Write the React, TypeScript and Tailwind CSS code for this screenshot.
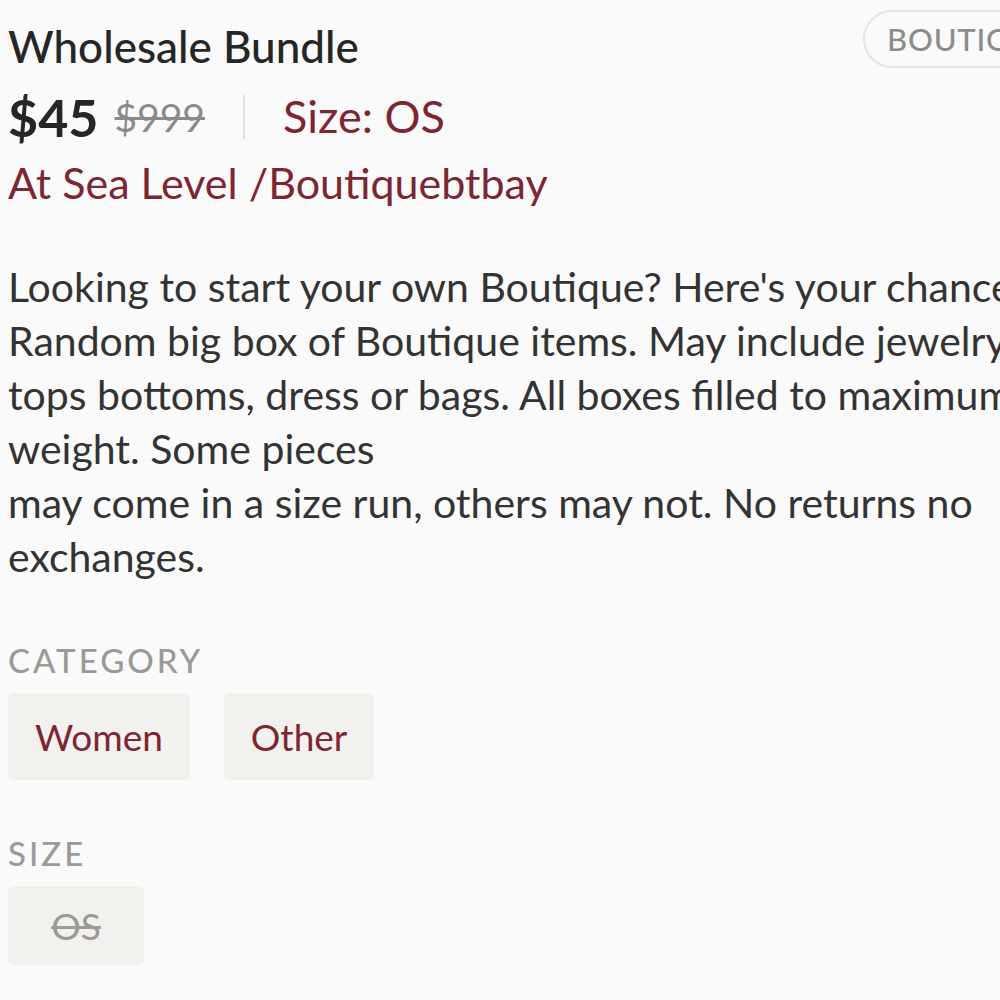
const descriptionLines = [
  "Looking to start your own Boutique? Here's your chance",
  "Random big box of Boutique items. May include jewelry,",
  "tops bottoms, dress or bags. All boxes filled to maximum",
  "weight. Some pieces",
  "may come in a size run, others may not. No returns no",
  "exchanges.",
];

const categories = ["Women", "Other"];

export default function App() {
  return (
    <div className="w-[1000px] h-[1000px] overflow-hidden bg-[#fafafa] font-['Lato','Liberation_Sans',sans-serif]">
      <div className="w-[1078px] pl-2">
        {/* Header */}
        <div className="flex justify-between items-start pt-[10px]">
          <h1 className="mt-[12px] text-[44px] leading-[48px] font-medium text-[#262626]">
            Wholesale Bundle
          </h1>
          <div className="h-[58px] px-[22px] flex items-center rounded-full border-2 border-[#e4e4e2] text-[31px] font-medium tracking-wide text-[#8c8c8a]">
            BOUTIQUE
          </div>
        </div>

        {/* Price row */}
        <div className="flex items-center mt-[19px] h-[56px]">
          <span className="text-[52px] font-bold text-[#262626]">$45</span>
          <span className="ml-4 text-[39px] text-[#8a8a8a] line-through">
            $999
          </span>
          <span className="mx-[38px] w-[2px] h-[44px] bg-[#e2e2e0]" />
          <span className="text-[45px] text-[#7d2633]">Size: OS</span>
        </div>

        <div className="mt-[12px] text-[43px] leading-[52px] text-[#7d2633]">
          At Sea Level /Boutiquebtbay
        </div>

        {/* Description */}
        <div className="mt-[51px] text-[41px] leading-[54px] text-[#333333]">
          {descriptionLines.map((line, i) => (
            <div key={i} className="whitespace-nowrap">
              {line}
            </div>
          ))}
        </div>

        {/* Category */}
        <div className="mt-[56px] text-[33px] leading-[40px] tracking-[0.09em] font-medium text-[#9a9a96]">
          CATEGORY
        </div>
        <div className="mt-[13px] flex gap-[34px]">
          {categories.map((c) => (
            <div
              key={c}
              className="h-[87px] px-[27px] flex items-center rounded-[5px] bg-[#f3f1ed] text-[37px] text-[#7d2633]"
            >
              {c}
            </div>
          ))}
        </div>

        {/* Size */}
        <div className="mt-[53px] text-[33px] leading-[40px] tracking-[0.09em] font-medium text-[#9a9a96]">
          SIZE
        </div>
        <div className="mt-[13px] flex">
          <div className="h-[79px] w-[136px] flex items-center justify-center rounded-[5px] bg-[#f3f1ed] text-[37px] text-[#9a9a98] line-through">
            OS
          </div>
        </div>
      </div>
    </div>
  );
}
